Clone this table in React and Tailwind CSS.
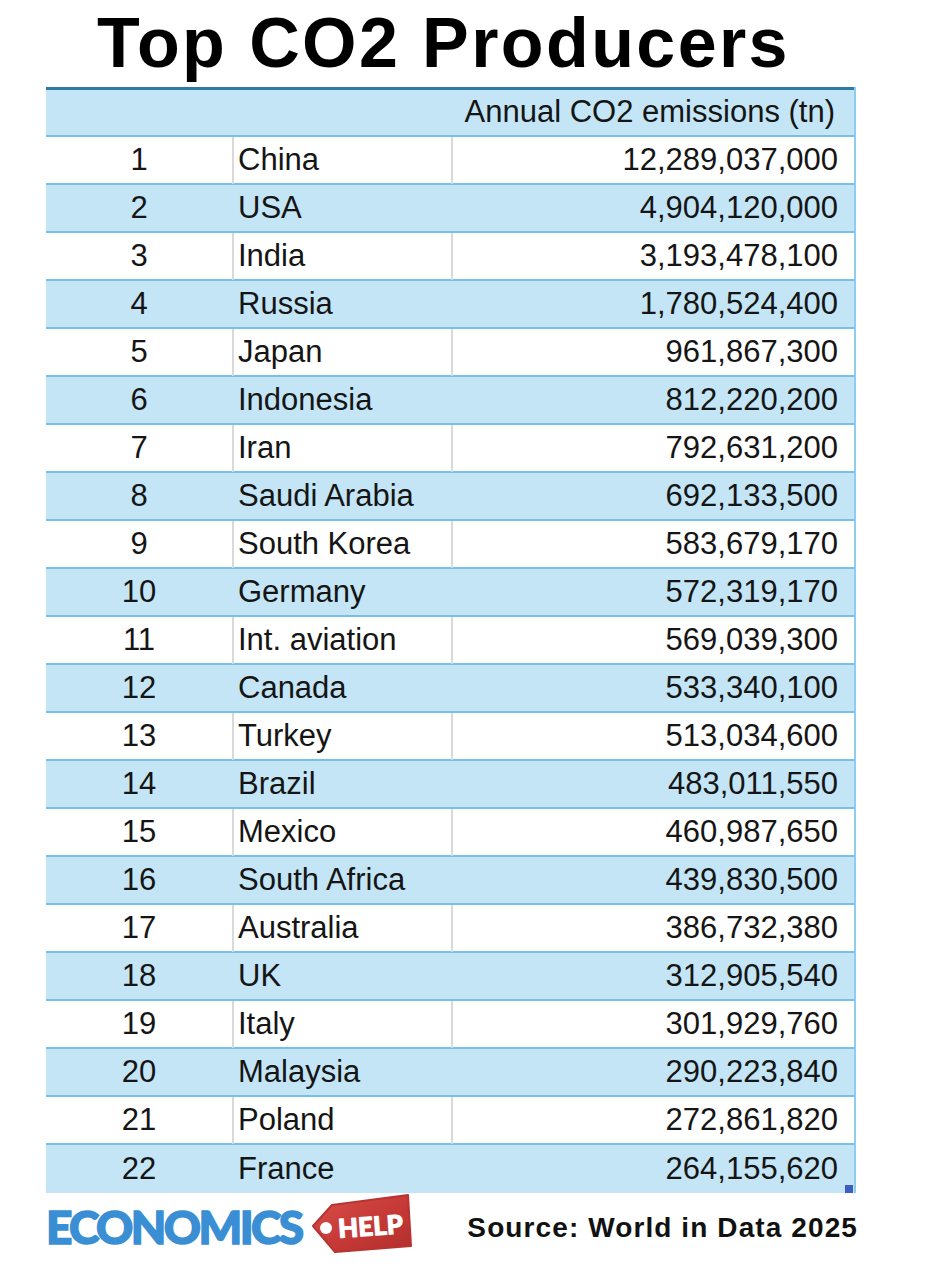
import React from "react";

const rows = [
  ["1", "China", "12,289,037,000"],
  ["2", "USA", "4,904,120,000"],
  ["3", "India", "3,193,478,100"],
  ["4", "Russia", "1,780,524,400"],
  ["5", "Japan", "961,867,300"],
  ["6", "Indonesia", "812,220,200"],
  ["7", "Iran", "792,631,200"],
  ["8", "Saudi Arabia", "692,133,500"],
  ["9", "South Korea", "583,679,170"],
  ["10", "Germany", "572,319,170"],
  ["11", "Int. aviation", "569,039,300"],
  ["12", "Canada", "533,340,100"],
  ["13", "Turkey", "513,034,600"],
  ["14", "Brazil", "483,011,550"],
  ["15", "Mexico", "460,987,650"],
  ["16", "South Africa", "439,830,500"],
  ["17", "Australia", "386,732,380"],
  ["18", "UK", "312,905,540"],
  ["19", "Italy", "301,929,760"],
  ["20", "Malaysia", "290,223,840"],
  ["21", "Poland", "272,861,820"],
  ["22", "France", "264,155,620"],
];

function Row({ r, i, last }) {
  const blue = i % 2 === 1;
  return (
    <div
      className={
        "relative grid grid-cols-[186px_219px_1fr] h-[48px] " +
        (blue ? "bg-[#c3e5f5] " : "bg-white ") +
        (last ? "" : "border-b-2 border-[#74c0e7]")
      }
    >
      <div className="flex items-center justify-center">{r[0]}</div>
      <div
        className={
          "flex items-center pl-[4px] border-l-2 " +
          (blue ? "border-transparent" : "border-[#d9d9d9]")
        }
      >
        {r[1]}
      </div>
      <div
        className={
          "flex items-center justify-end pr-[16px] border-l-2 " +
          (blue ? "border-transparent" : "border-[#d9d9d9]")
        }
      >
        {r[2]}
      </div>
      {last && (
        <div className="absolute right-[1px] bottom-0 w-[8px] h-[8px] bg-[#3d5fc4]" />
      )}
    </div>
  );
}

function Tag() {
  return (
    <svg width="108" height="64" viewBox="0 0 108 64" className="block">
      <defs>
        <linearGradient id="tg" x1="0" y1="0" x2="1" y2="1">
          <stop offset="0" stopColor="#d9504a" />
          <stop offset="0.5" stopColor="#c73a37" />
          <stop offset="1" stopColor="#b22f2e" />
        </linearGradient>
      </defs>
      <polygon points="6,34 25,13 101,3 104,54 28,60" fill="url(#tg)" strokeLinejoin="round" stroke="#b83432" strokeWidth="2" />
      <circle cx="19" cy="36" r="6" fill="#ffffff" />
      <text
        x="31"
        y="44"
        transform="rotate(-4 60 34)"
        fill="#ffffff"
        stroke="#ffffff"
        strokeWidth="1"
        strokeLinejoin="round"
        fontFamily="Lato, 'Liberation Sans', sans-serif"
        fontWeight="900"
        fontSize="26"
      >
        HELP
      </text>
    </svg>
  );
}

export default function App() {
  return (
    <div className="w-[946px] h-[1280px] bg-white overflow-hidden" style={{ fontFamily: "'Liberation Sans', Arial, sans-serif" }}>
      <div className="h-[87px] pt-[8px] pl-[97px]">
        <div className="text-[70px] leading-none font-bold tracking-[2.4px] text-black whitespace-nowrap">
          Top CO2 Producers
        </div>
      </div>
      <div className="ml-[46px] w-[810px] border-r-2 border-[#8fcdee] text-[31px] text-[#151515]">
        <div className="h-[50px] bg-[#c3e5f5] border-t-[3px] border-[#2c7aa5] border-b-2 border-b-[#74c0e7] flex items-center justify-end pr-[19px]">
          Annual CO2 emissions (tn)
        </div>
        {rows.map((r, i) => (
          <Row key={r[0]} r={r} i={i} last={i === rows.length - 1} />
        ))}
      </div>
      <div className="flex items-start h-[87px]">
        <div
          className="ml-[46px] mt-[11px] text-[46px] leading-none font-black tracking-[-2.6px] text-[#3a8fd4] [-webkit-text-stroke:1.5px_#3a8fd4] [paint-order:stroke_fill] whitespace-nowrap"
          style={{ fontFamily: "Lato, 'Liberation Sans', sans-serif" }}
        >
          ECONOMICS
        </div>
        <div className="-mt-[1px] ml-[6px]">
          <Tag />
        </div>
        <div className="ml-auto mr-[88px] mt-[21px] text-[28px] leading-none font-bold tracking-[1.1px] text-[#111] whitespace-nowrap">
          Source: World in Data 2025
        </div>
      </div>
    </div>
  );
}
